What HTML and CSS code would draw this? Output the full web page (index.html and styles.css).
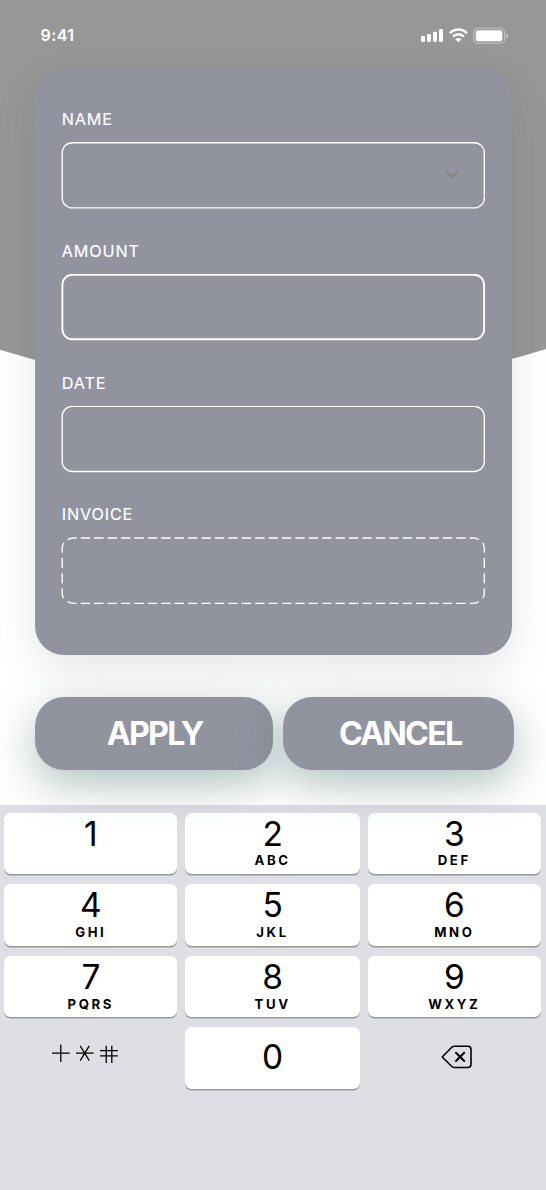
FILE: index.html
```html
<!DOCTYPE html>
<html lang="en">
<head>
<meta charset="utf-8">
<title>Invoice form</title>
<link rel="stylesheet" href="styles.css">
</head>
<body>
<div class="screen">
  <svg class="backdrop" width="546" height="410" viewBox="0 0 546 410"><path d="M0 0H546V349A915 915 0 0 1 0 349.8Z" fill="#979797"/></svg>
  <header class="status">
    <span class="time">9:41</span>
    <svg class="status-icons" width="90" height="20" viewBox="0 0 90 20" fill="#fff">
      <rect x="1" y="11" width="4" height="6" rx="1.2"/><rect x="7" y="9" width="4" height="8" rx="1.2"/><rect x="13" y="6.7" width="4" height="10.3" rx="1.2"/><rect x="19" y="4" width="4" height="13" rx="1.2"/>
      <g fill="none" stroke="#fff" stroke-width="2.6"><path d="M29.9 8.1A12 12 0 0 1 46.9 8.1"/><path d="M33 11.5A7.7 7.7 0 0 1 43.8 11.5"/></g>
      <path d="M38.4 17.2L35.3 14.1Q38.4 11.7 41.5 14.1Z"/>
      <rect x="53.7" y="3.2" width="31" height="15" rx="4.3" fill="none" stroke="#fff" stroke-opacity=".38" stroke-width="1.3"/>
      <rect x="55.8" y="5.2" width="26.5" height="11" rx="2.2"/><path d="M86.2 8.2Q88.3 9 88.3 10.7T86.2 13.2Z" opacity=".45"/>
    </svg>
  </header>
  <main class="card">
    <section class="group"><div class="label">NAME</div>
      <div class="field"><svg class="frame" viewBox="0 0 424 67"><rect x="1.2" y=".7" width="422.1" height="65.2" rx="10"/></svg>
      <svg class="chevron" width="16" height="12" viewBox="0 0 16 12"><path d="M2.8 3.2L8 8.2L13.2 3.2"/></svg></div></section>
    <section class="group"><div class="label">AMOUNT</div>
      <div class="field"><svg class="frame strong" viewBox="0 0 424 67"><rect x="1.4" y=".7" width="421.7" height="64.6" rx="10"/></svg></div></section>
    <section class="group"><div class="label">DATE</div>
      <div class="field"><svg class="frame" viewBox="0 0 424 67"><rect x="1.2" y=".4" width="422.1" height="65.1" rx="10"/></svg></div></section>
    <section class="group"><div class="label">INVOICE</div>
      <div class="field"><svg class="frame" viewBox="0 0 424 67"><g stroke-dasharray="9.35 4.06"><path d="M6.6 2.6Q9.2 1 12.6 1H412Q415.4 1 418 2.6"/><path d="M6.6 64.6Q9.2 66.3 12.6 66.3H412Q415.4 66.3 418 64.6"/></g><g stroke-dasharray="10 5.2"><path d="M2.7 6Q1.2 8.5 1.2 11.5V56Q1.2 59 2.7 61.5"/><path d="M421.8 6Q423.3 8.5 423.3 11.5V56Q423.3 59 421.8 61.5"/></g></svg></div></section>
  </main>
  <div class="actions">
    <button class="button apply">APPLY</button>
    <button class="button cancel">CANCEL</button>
  </div>
  <div class="keyboard">
    <div class="key"><b>1</b></div>
    <div class="key first"><b>2</b><i>ABC</i></div>
    <div class="key first"><b>3</b><i>DEF</i></div>
    <div class="key"><b>4</b><i>GHI</i></div>
    <div class="key"><b>5</b><i>JKL</i></div>
    <div class="key"><b>6</b><i>MNO</i></div>
    <div class="key"><b>7</b><i>PQRS</i></div>
    <div class="key"><b>8</b><i>TUV</i></div>
    <div class="key"><b>9</b><i>WXYZ</i></div>
    <div class="plain symbols"><svg width="68" height="22" viewBox="0 0 68 22" fill="none" stroke="#000" stroke-width="1.3"><path d="M1 10.2H18.7M9.8 1.5V18.9M25 10.2H42.5M29.2 2.8L38.3 17.7M38.3 2.8L29.2 17.7M49 7.6H66.8M49 12.9H66.8M55.2 2.8V19.9M60.8 2.8V19.9"/></svg></div>
    <div class="key zero"><b>0</b></div>
    <div class="plain erase"><svg width="32" height="24" viewBox="0 0 32 24" fill="none" stroke="#000" stroke-width="1.6" stroke-linecap="round" stroke-linejoin="round"><path d="M1.2 12L10.8 2.2Q12 1.2 13.5 1.2H26.8Q30 1.2 30 4.4V19.3Q30 22.5 26.8 22.5H13.5Q12 22.5 10.8 21.5Z"/><path d="M15 7.7L23.2 16M23.2 7.7L15 16" stroke-width="2"/></svg></div>
  </div>
</div>
</body>
</html>
```
FILE: styles.css
```css
* { box-sizing: border-box; }
body { margin: 0; background: #fff; font-family: Inter, "Liberation Sans", sans-serif; }
.screen { position: relative; width: 546px; height: 1190px; overflow: hidden; }
.backdrop { position: absolute; left: 0; top: 0; }
.status { position: relative; height: 69px; padding: 25px 36px 0 40.5px; display: flex; justify-content: space-between; align-items: flex-start; color: #fff; }
.time { font-size: 16px; line-height: 21px; font-weight: 600; letter-spacing: .4px; }
.status-icons { display: block; }
.card { position: relative; width: 476.5px; height: 585.5px; margin-left: 35px; padding: 39px 0 0 26.4px; border-radius: 29px; background: #91939f; box-shadow: 0 14px 44px rgba(0, 0, 0, .1); }
.group { height: 131.8px; }
.label { height: 34px; line-height: 22px; font-size: 16.2px; font-weight: 400; letter-spacing: .85px; color: #fff; padding-left: .4px; -webkit-text-stroke: .15px #fff; }
.field { position: relative; width: 424px; height: 67px; }
.frame { display: block; width: 424px; height: 67px; fill: none; stroke: #fff; stroke-width: 1.35; }
.strong { stroke-width: 1.9; }
.chevron { position: absolute; left: 383px; top: 27px; fill: none; stroke: #858585; stroke-width: 2.4; stroke-linecap: round; stroke-linejoin: round; }
.actions { position: relative; z-index: 1; display: flex; gap: 9.5px; margin: 42.7px 0 0 35px; }
.button { height: 72.6px; padding: 2px 0 0 1px; border: 0; border-radius: 29px; color: #fff; background: #91939f; box-shadow: 0 14px 44px rgba(47, 93, 87, .38); font: 700 32.3px/70px Inter, "Liberation Sans", sans-serif; letter-spacing: -1.85px; }
.apply { width: 238.3px; }
.cancel { width: 231.7px; padding-left: 3px; }
.keyboard { height: 385px; margin-top: 35.2px; padding: 8px 4.4px; background: #dedfe5; display: grid; grid-template-columns: 173px 174.5px 173px; grid-auto-rows: 62px; column-gap: 8px; row-gap: 9.5px; }
.key { height: 61.5px; padding-top: 1px; background: #fff; border-radius: 6.5px; box-shadow: 0 1.4px 0 #95979b; display: flex; flex-direction: column; align-items: center; color: #000; }
.key b { font-size: 33.5px; line-height: 40px; font-weight: 400; }
.key i { font-size: 13.2px; line-height: 14px; font-style: normal; font-weight: 700; letter-spacing: 2.6px; margin-right: .2px; }
.first i { line-height: 12.5px; }
.zero { padding-top: 10px; }
.plain { display: flex; }
.symbols { padding: 16px 0 0 46.6px; }
.erase { padding: 18px 0 0 73.6px; }
```
